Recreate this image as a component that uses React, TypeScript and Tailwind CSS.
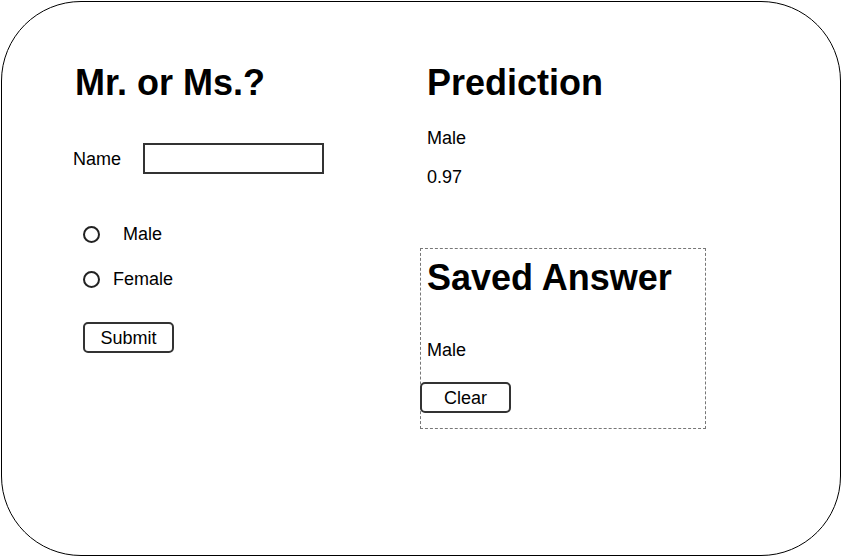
import { useState } from "react";

const App = () => {
  const [name, setName] = useState("");
  const [gender, setGender] = useState("");

  return (
    <div className="w-[843px] h-[557px] bg-white font-['Liberation_Sans',Arial,sans-serif] text-black">
      <div className="ml-px mt-px w-[840px] h-[555px] border border-black rounded-[80px] flex">
        {/* left side: the form */}
        <div className="w-[349px] pl-[71px] pt-[63px] flex flex-col">
          <h1 className="pl-[2px] text-[36px] leading-[36px] font-bold">Mr. or Ms.?</h1>

          <div className="mt-[42px] flex items-center">
            <label className="w-[70px] text-[18px] leading-[18px]">Name</label>
            <input
              value={name}
              onChange={(e) => setName(e.target.value)}
              className="w-[181px] h-[31px] border-2 border-[#333] outline-none px-1"
            />
          </div>

          <div className="mt-[50px] h-[20px] flex items-center ml-[10px]">
            <button
              onClick={() => setGender("Male")}
              className="w-[17px] h-[17px] rounded-full border-2 border-[#222]"
            />
            <span className="ml-[23px] text-[18px] leading-[18px]">Male</span>
          </div>
          <div className="mt-[25px] h-[20px] flex items-center ml-[10px]">
            <button
              onClick={() => setGender("Female")}
              className="w-[17px] h-[17px] rounded-full border-2 border-[#222]"
            />
            <span className="ml-[13px] text-[18px] leading-[18px]">Female</span>
          </div>

          <button className="mt-[33px] ml-[10px] w-[91px] h-[31px] border-2 border-[#333] rounded-[5px] text-[18px] leading-[18px]">
            Submit
          </button>
        </div>

        {/* right side: prediction + saved answer */}
        <div className="pl-[69px] pt-[63px] flex flex-col">
          <div className="pl-[7px]">
            <h1 className="text-[36px] leading-[36px] font-bold">Prediction</h1>
            <p className="mt-[28px] text-[18px] leading-[18px]">Male</p>
            <p className="mt-[21px] text-[18px] leading-[18px]">0.97</p>
          </div>

          <div className="mt-[62px] w-[286px] h-[181px] border border-dashed border-[#777] pl-[6px] pt-[11px] flex flex-col items-start">
            <h1 className="text-[36px] leading-[36px] font-bold">Saved Answer</h1>
            <p className="mt-[45px] text-[18px] leading-[18px]">{gender || "Male"}</p>
            <button
              onClick={() => setGender("")}
              className="mt-[23px] -ml-[7px] w-[91px] h-[31px] border-2 border-[#333] rounded-[5px] text-[18px] leading-[18px] bg-white"
            >
              Clear
            </button>
          </div>
        </div>
      </div>
    </div>
  );
};

export default App;
